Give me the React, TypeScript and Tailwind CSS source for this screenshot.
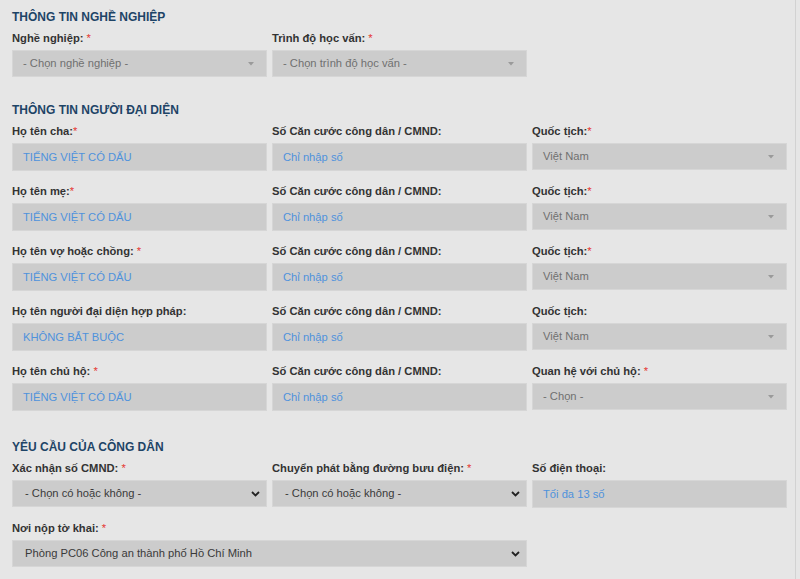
import React from "react";

const font = { fontFamily: '"Liberation Sans", Arial, sans-serif' };

function Label({ text, req, space = true }: { text: string; req?: boolean; space?: boolean }) {
  return (
    <div className="h-[22px] leading-[20px] text-[11.2px] font-bold text-[#333333] whitespace-nowrap">
      {text}
      {req && <span className="text-[#e53935] font-normal">{space ? " *" : "*"}</span>}
    </div>
  );
}

function TextBox({ ph }: { ph: string }) {
  return (
    <div className="h-[28px] bg-[#cccccc] border border-[#d6d6d6] flex items-center pl-[10px] text-[11.2px] text-[#4f92dc] whitespace-nowrap">
      {ph}
    </div>
  );
}

function Select2({ value }: { value: string }) {
  return (
    <div className="h-[28px]">
      <div className="h-[27px] bg-[#cccccc] border border-[#d6d6d6] flex items-center justify-between pl-[10px] pr-[12px] text-[11.2px] text-[#707070] whitespace-nowrap">
        <span>{value}</span>
        <svg width="6" height="4" viewBox="0 0 6 4">
          <path d="M0 0 L6 0 L3 3.5 Z" fill="#9a9a9a" />
        </svg>
      </div>
    </div>
  );
}

function NativeSelect({ value }: { value: string }) {
  return (
    <div className="h-[28px]">
      <div className="h-[27px] bg-[#cccccc] border border-[#d6d6d6] flex items-center justify-between pl-[12px] pr-[6px] text-[11.2px] text-[#3a3a3a] whitespace-nowrap">
        <span>{value}</span>
        <svg width="9" height="6" viewBox="0 0 9 6">
          <polyline points="1,1 4.5,4.5 8,1" fill="none" stroke="#222" strokeWidth="1.8" />
        </svg>
      </div>
    </div>
  );
}

function Title({ text }: { text: string }) {
  return (
    <div className="h-[18px] leading-[18px] mb-[2px] text-[12px] font-bold text-[#1e4466] uppercase">{text}</div>
  );
}

type Field = { label: string; req?: boolean; space?: boolean; kind: "text" | "s2" | "native"; value: string; span?: boolean };

function Grid({ fields }: { fields: Field[] }) {
  return (
    <div className="grid grid-cols-[255px_255px_255px] gap-x-[5px] gap-y-[10px]">
      {fields.map((f, i) => (
        <div key={i} className={f.span ? "col-span-2" : ""}>
          <Label text={f.label} req={f.req} space={f.space} />
          {f.kind === "text" ? <TextBox ph={f.value} /> : f.kind === "s2" ? <Select2 value={f.value} /> : <NativeSelect value={f.value} />}
        </div>
      ))}
    </div>
  );
}

const CC = "Số Căn cước công dân / CMND:";

export default function App() {
  const sec1: Field[] = [
    { label: "Nghề nghiệp:", req: true, kind: "s2", value: "- Chọn nghề nghiệp -" },
    { label: "Trình độ học vấn:", req: true, kind: "s2", value: "- Chọn trình độ học vấn -" },
  ];
  const sec2: Field[] = [
    { label: "Họ tên cha:", req: true, space: false, kind: "text", value: "TIẾNG VIỆT CÓ DẤU" },
    { label: CC, kind: "text", value: "Chỉ nhập số" },
    { label: "Quốc tịch:", req: true, space: false, kind: "s2", value: "Việt Nam" },
    { label: "Họ tên mẹ:", req: true, space: false, kind: "text", value: "TIẾNG VIỆT CÓ DẤU" },
    { label: CC, kind: "text", value: "Chỉ nhập số" },
    { label: "Quốc tịch:", req: true, space: false, kind: "s2", value: "Việt Nam" },
    { label: "Họ tên vợ hoặc chồng:", req: true, kind: "text", value: "TIẾNG VIỆT CÓ DẤU" },
    { label: CC, kind: "text", value: "Chỉ nhập số" },
    { label: "Quốc tịch:", req: true, space: false, kind: "s2", value: "Việt Nam" },
    { label: "Họ tên người đại diện hợp pháp:", kind: "text", value: "KHÔNG BẮT BUỘC" },
    { label: CC, kind: "text", value: "Chỉ nhập số" },
    { label: "Quốc tịch:", kind: "s2", value: "Việt Nam" },
    { label: "Họ tên chủ hộ:", req: true, kind: "text", value: "TIẾNG VIỆT CÓ DẤU" },
    { label: CC, kind: "text", value: "Chỉ nhập số" },
    { label: "Quan hệ với chủ hộ:", req: true, kind: "s2", value: "- Chọn -" },
  ];
  const sec3: Field[] = [
    { label: "Xác nhận số CMND:", req: true, kind: "native", value: "- Chọn có hoặc không -" },
    { label: "Chuyển phát bằng đường bưu điện:", req: true, kind: "native", value: "- Chọn có hoặc không -" },
    { label: "Số điện thoại:", kind: "text", value: "Tối đa 13 số" },
    { label: "Nơi nộp tờ khai:", req: true, kind: "native", value: "Phòng PC06 Công an thành phố Hồ Chí Minh", span: true },
  ];
  return (
    <div className="w-[800px] h-[579px] bg-[#e6e6e6] overflow-hidden" style={font}>
      <div className="w-[796px] h-full border-r border-[#d2d2d2] pl-[12px] pt-[8px]">
        <Title text="Thông tin nghề nghiệp" />
        <Grid fields={sec1} />
        <div className="mt-[23px]">
          <Title text="Thông tin người đại diện" />
          <Grid fields={sec2} />
        </div>
        <div className="mt-[27px]">
          <Title text="Yêu cầu của công dân" />
          <Grid fields={sec3} />
        </div>
      </div>
    </div>
  );
}
